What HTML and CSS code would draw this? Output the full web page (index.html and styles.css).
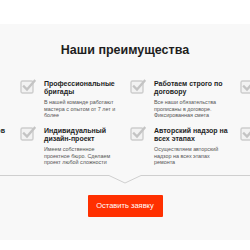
FILE: index.html
```html
<!DOCTYPE html>
<html lang="ru">
<head>
  <meta charset="UTF-8" />
  <meta name="viewport" content="width=device-width, initial-scale=1.0"/>
  <title>Наши преимущества</title>
  <link rel="stylesheet" href="styles.css">
</head>
<body>
  <section class="advantages">
    <h2>Наши преимущества</h2>

    <div class="grid-wrap">
      <div class="grid">
        <div class="item">
          <svg class="check" viewBox="0 0 16 16"><rect x="1" y="3" width="12" height="12" rx="1.5"/><path d="M4 8.5 L7 11.5 L14.5 3"/></svg>
          <div class="text">
            <div class="title">Гарантия качества</div>
            <div class="desc">Даём гарантию на все работы, что закреплено в договоре подряда</div>
          </div>
        </div>
        <div class="item">
          <svg class="check" viewBox="0 0 16 16"><rect x="1" y="3" width="12" height="12" rx="1.5"/><path d="M4 8.5 L7 11.5 L14.5 3"/></svg>
          <div class="text">
            <div class="title">Профессиональные бригады</div>
            <div class="desc">В нашей команде работают мастера с опытом от 7 лет и более</div>
          </div>
        </div>
        <div class="item">
          <svg class="check" viewBox="0 0 16 16"><rect x="1" y="3" width="12" height="12" rx="1.5"/><path d="M4 8.5 L7 11.5 L14.5 3"/></svg>
          <div class="text">
            <div class="title">Работаем строго по договору</div>
            <div class="desc">Все наши обязательства прописаны в договоре. Фиксированная смета</div>
          </div>
        </div>
        <div class="item">
          <svg class="check" viewBox="0 0 16 16"><rect x="1" y="3" width="12" height="12" rx="1.5"/><path d="M4 8.5 L7 11.5 L14.5 3"/></svg>
          <div class="text">
            <div class="title">Соблюдение сроков</div>
            <div class="desc">Сдаём объект точно в срок, указанный в договоре</div>
          </div>
        </div>

        <div class="item">
          <svg class="check" viewBox="0 0 16 16"><rect x="1" y="3" width="12" height="12" rx="1.5"/><path d="M4 8.5 L7 11.5 L14.5 3"/></svg>
          <div class="text">
            <div class="title">Закупка материалов</div>
            <div class="desc">Закупаем и доставляем материалы на объект со скидкой до 30% с каждым заказом</div>
          </div>
        </div>
        <div class="item">
          <svg class="check" viewBox="0 0 16 16"><rect x="1" y="3" width="12" height="12" rx="1.5"/><path d="M4 8.5 L7 11.5 L14.5 3"/></svg>
          <div class="text">
            <div class="title">Индивидуальный дизайн-проект</div>
            <div class="desc">Имеем собственное проектное бюро. Сделаем проект любой сложности</div>
          </div>
        </div>
        <div class="item">
          <svg class="check" viewBox="0 0 16 16"><rect x="1" y="3" width="12" height="12" rx="1.5"/><path d="M4 8.5 L7 11.5 L14.5 3"/></svg>
          <div class="text">
            <div class="title">Авторский надзор на всех этапах</div>
            <div class="desc">Осуществляем авторский надзор на всех этапах ремонта</div>
          </div>
        </div>
        <div class="item">
          <svg class="check" viewBox="0 0 16 16"><rect x="1" y="3" width="12" height="12" rx="1.5"/><path d="M4 8.5 L7 11.5 L14.5 3"/></svg>
          <div class="text">
            <div class="title">Уборка после ремонта</div>
            <div class="desc">Вывозим мусор и проводим клининг</div>
          </div>
        </div>
      </div>
    </div>

    <div class="divider">
      <span class="line"></span>
      <svg class="notch" viewBox="0 0 32 9"><path d="M0 0.5 L16 8 L32 0.5"/></svg>
      <span class="line"></span>
    </div>

    <div class="actions">
      <button type="button" class="order-btn">Оставить заявку</button>
    </div>
  </section>
</body>
</html>
```

FILE: styles.css
```css
*, *::before, *::after {
  box-sizing: border-box;
}

body {
  margin: 0;
  background-color: #ffffff;
  font-family: "Liberation Sans", Arial, sans-serif;
  color: #222;
  overflow: hidden;
}

.advantages {
  margin-top: 24px;
  background-color: #f8f8f8;
  padding: 18px 0 23px;
}

h2 {
  margin: 0;
  font-size: 12.5px;
  line-height: 16px;
  font-weight: bold;
  text-align: center;
  color: #1e1e1e;
}

.grid-wrap {
  display: flex;
  justify-content: center;
  margin-top: 22px;
}

.grid {
  flex: none;
  width: 440px;
  display: grid;
  grid-template-columns: repeat(4, 110px);
  row-gap: 8px;
  margin-left: 10px;
}

.item {
  display: flex;
  align-items: flex-start;
  gap: 8px;
  height: 39px;
}

.check {
  flex: none;
  width: 16px;
  height: 16px;
  margin-top: -2px;
  fill: #f2f2f2;
  stroke: #cdcdcd;
}

.check rect {
  stroke-width: 1.4;
}

.check path {
  fill: none;
  stroke: #c4c4c4;
  stroke-width: 2.4;
  stroke-linecap: square;
}

.text {
  width: 74px;
}

.title {
  font-size: 7px;
  line-height: 8px;
  font-weight: bold;
  color: #1e1e1e;
}

.desc {
  margin-top: 3px;
  font-size: 5.4px;
  line-height: 6.5px;
  color: #555;
}

.divider {
  display: flex;
  align-items: flex-start;
  margin-top: 9px;
}

.line {
  flex: 1;
  border-top: 1px solid #cfcfcf;
}

.notch {
  flex: none;
  width: 32px;
  height: 9px;
  margin-top: -0.5px;
  fill: none;
  stroke: #cfcfcf;
  stroke-width: 1;
}

.actions {
  display: flex;
  justify-content: center;
  margin-top: 11px;
}

.order-btn {
  width: 75px;
  height: 22px;
  padding: 0;
  border: none;
  border-radius: 1px;
  background-color: #ff3000;
  color: #fff;
  font-family: "Liberation Sans", Arial, sans-serif;
  font-size: 7.5px;
  cursor: pointer;
}
```
